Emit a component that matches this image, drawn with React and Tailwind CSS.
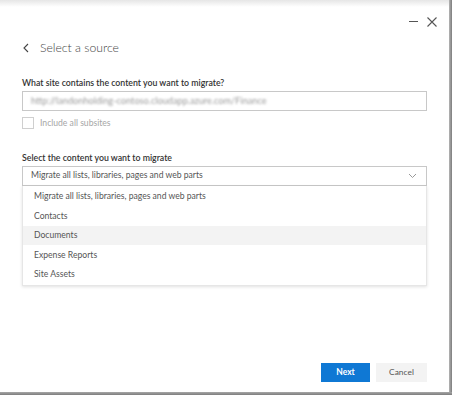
export default function App() {
  const items = [
    "Migrate all lists, libraries, pages and web parts",
    "Contacts",
    "Documents",
    "Expense Reports",
    "Site Assets",
  ];
  return (
    <div className="w-[452px] h-[395px] bg-white overflow-hidden flex flex-col" style={{ fontFamily: 'Lato, "Open Sans", sans-serif' }}>
      <div className="flex flex-1">
        <div className="w-[449px] flex flex-col">
          <div className="h-[7px] bg-gradient-to-b from-[#e6e6e6] to-white" />
          <div className="flex justify-end items-center gap-[9px] h-[28px] pt-[1px] pr-[12px]">
            <div className="w-[9px] h-[1px] bg-[#555]" />
            <svg width="10" height="10" viewBox="0 0 10 10" className="text-[#555]">
              <path d="M0.5 0.5 L9.5 9.5 M9.5 0.5 L0.5 9.5" stroke="currentColor" strokeWidth="1.1" fill="none" />
            </svg>
          </div>
          <div className="flex-1 flex flex-col px-[22px] text-[#333]">
            <div className="flex items-center h-[26px]">
              <svg width="6" height="10" viewBox="0 0 6 10" className="ml-[1px] text-[#444]">
                <path d="M5 1 L1 5 L5 9" stroke="currentColor" strokeWidth="1.1" fill="none" />
              </svg>
              <span className="ml-[11px] text-[12.2px] font-light text-[#444] leading-none">Select a source</span>
            </div>
            <div className="mt-[16px] text-[8.75px] font-semibold leading-[12px]">What site contains the content you want to migrate?</div>
            <div className="mt-[2px] h-[20px] border border-[#c8c8c8] flex items-center px-[8px]">
              <span className="text-[9.2px] text-[#9a9a9a] blur-[1.2px] whitespace-nowrap">http://landonholding-contoso.cloudapp.azure.com/Finance</span>
            </div>
            <div className="mt-[6px] flex items-center">
              <div className="w-[12px] h-[12px] border border-[#cfcfcf]" />
              <span className="ml-[6px] text-[8.6px] text-[#a6a6a6]">Include all subsites</span>
            </div>
            <div className="mt-[22px] text-[8.75px] font-semibold leading-[12px]">Select the content you want to migrate</div>
            <div className="mt-[2px] h-[20px] border border-[#c8c8c8] flex items-center justify-between px-[8px]">
              <span className="text-[8.6px] text-[#555] whitespace-nowrap">Migrate all lists, libraries, pages and web parts</span>
              <svg width="9" height="6" viewBox="0 0 9 6" className="mr-[1px] text-[#999]">
                <path d="M1 1 L4.5 4.5 L8 1" stroke="currentColor" strokeWidth="1" fill="none" />
              </svg>
            </div>
            <div className="border border-[#e6e6e6] border-t-0 shadow-[0_1px_3px_rgba(0,0,0,0.12)] flex flex-col py-[1px]">
              {items.map((t) => (
                <div key={t} className={`h-[19.5px] flex items-center px-[11px] text-[8.6px] text-[#555] whitespace-nowrap ${t === "Documents" ? "bg-[#f3f3f3]" : ""}`}>
                  {t}
                </div>
              ))}
            </div>
            <div className="flex-1" />
            <div className="flex justify-end gap-[6px] mb-[10px]">
              <div className="w-[49px] h-[19px] bg-[#0f78d4] text-white text-[8.5px] font-bold flex items-center justify-center">Next</div>
              <div className="w-[51px] h-[19px] bg-[#f3f3f3] text-[#555] text-[8.4px] flex items-center justify-center">Cancel</div>
            </div>
          </div>
        </div>
        <div className="w-[3px] bg-gradient-to-r from-[#b5b5b5] to-[#7d7d7d]" />
      </div>
      <div className="h-[3px] bg-gradient-to-b from-[#a8a8a8] to-[#7d7d7d]" />
    </div>
  );
}
